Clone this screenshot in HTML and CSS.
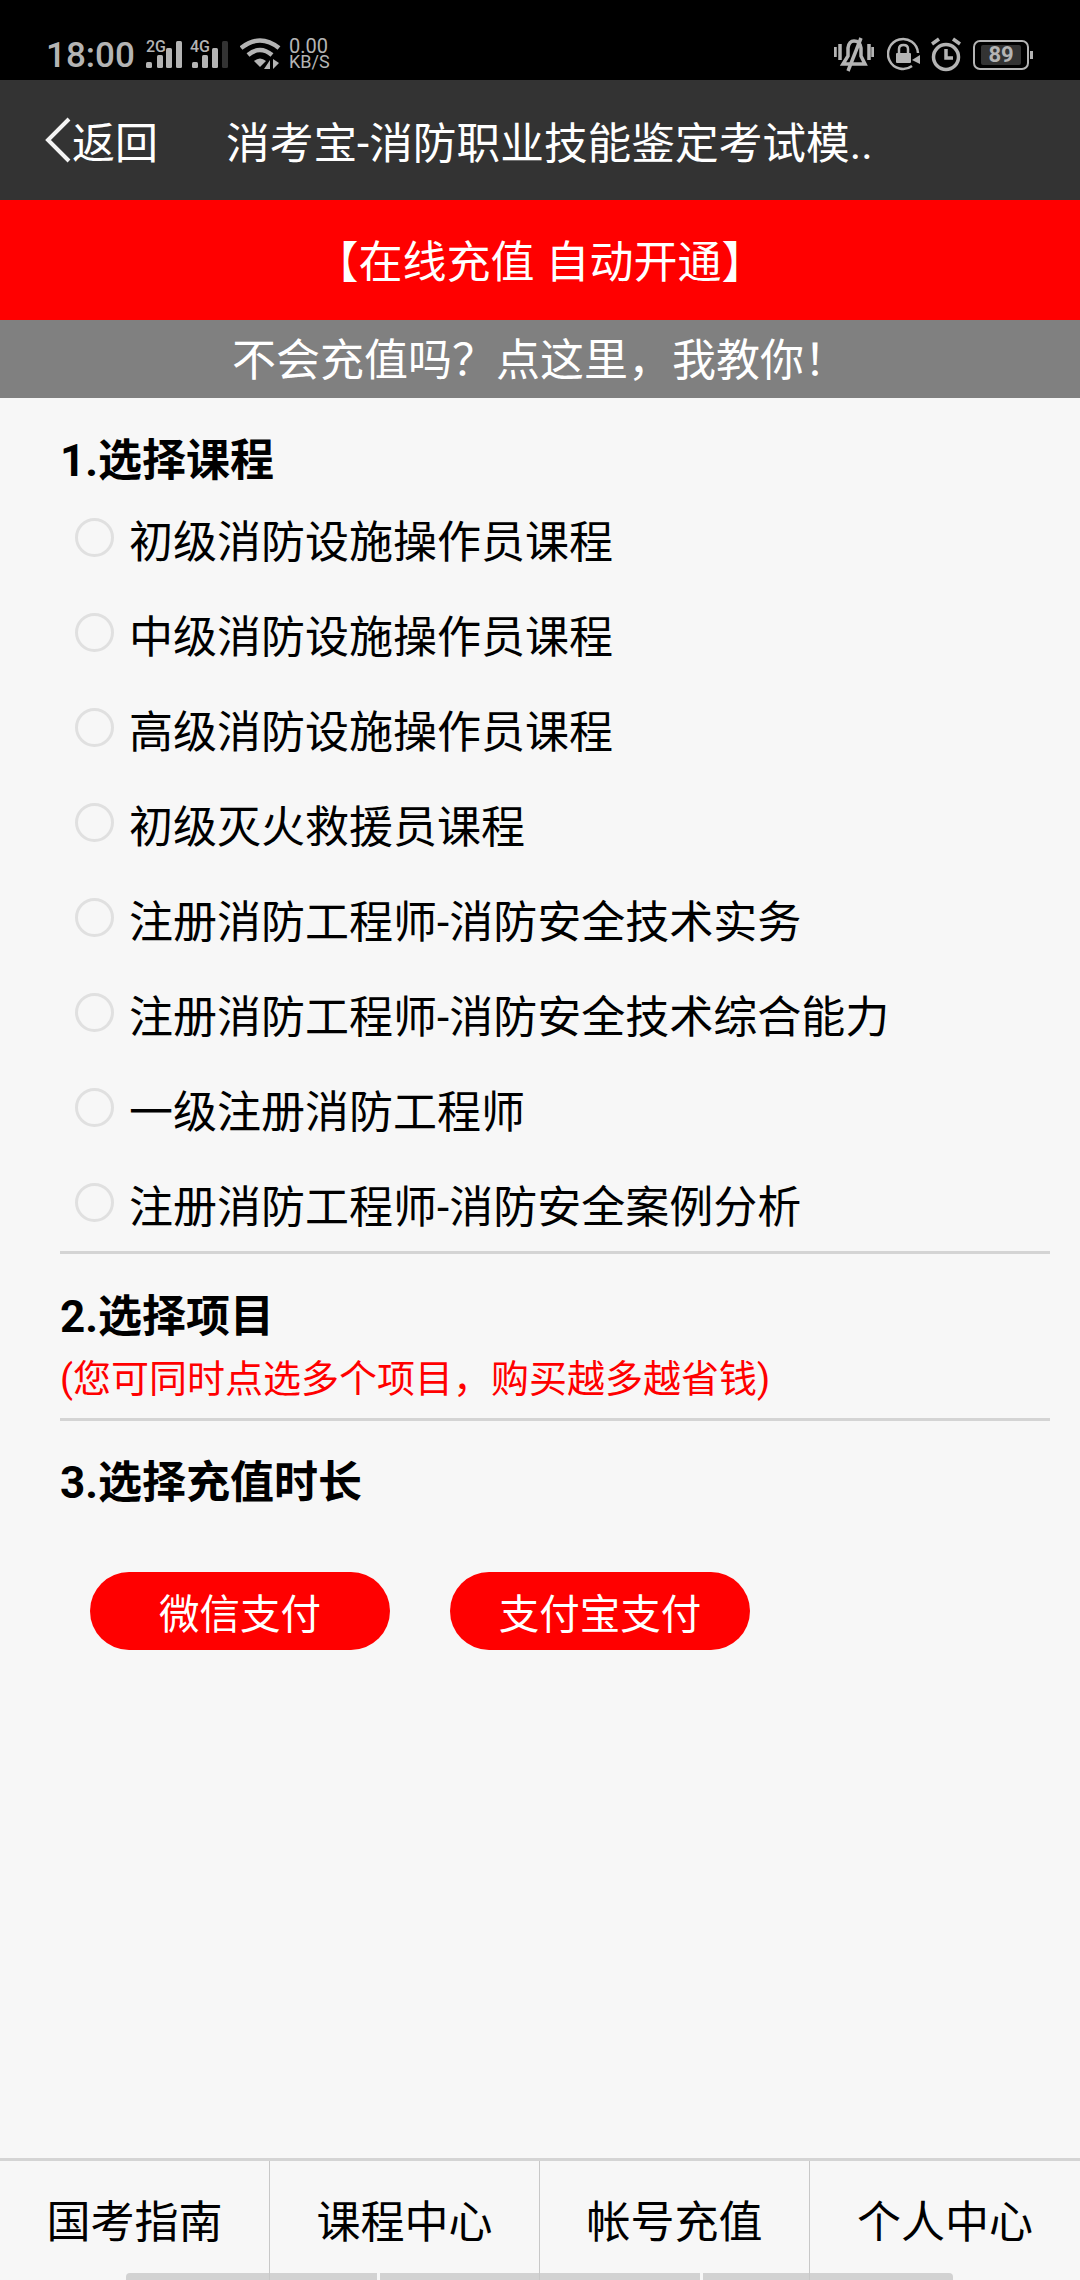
FILE: index.html
```html
<!DOCTYPE html>
<html lang="zh-CN">
<head>
    <meta charset="UTF-8">
    <meta name="viewport" content="width=device-width, initial-scale=1.0">
    <title>在线充值</title>
    <link rel="stylesheet" href="styles.css">
</head>
<body>
    <div class="status-bar">
        <span class="clock-text">18:00</span>
        <div class="signal">
            <span class="net-label">2G</span>
            <svg width="38" height="36" viewBox="0 0 38 36">
                <rect x="0" y="26" width="6" height="6" rx="1.5"/>
                <rect x="11" y="19" width="6" height="13" rx="1.5"/>
                <rect x="20" y="12" width="6" height="20" rx="1.5"/>
                <rect x="30" y="5" width="6" height="27" rx="1.5"/>
            </svg>
        </div>
        <div class="signal second">
            <span class="net-label">4G</span>
            <svg width="38" height="36" viewBox="0 0 38 36">
                <rect x="0" y="26" width="6" height="6" rx="1.5"/>
                <rect x="10" y="19" width="6" height="13" rx="1.5"/>
                <rect x="20" y="12" width="6" height="20" rx="1.5"/>
                <rect class="dim" x="30" y="5" width="6" height="27" rx="1.5"/>
            </svg>
        </div>
        <svg class="icon-wifi" width="44" height="36" viewBox="0 0 44 36">
            <path class="line" d="M1 12 Q20 -3 39 12"/>
            <path class="line" d="M8 19 Q20 9 32 19"/>
            <path d="M14 25 Q20 20 26 25 L20 31Z"/>
            <path d="M30 33 L30 24 L24 33Z M33 23 L33 33 L39 27Z"/>
        </svg>
        <div class="speed"><span>0.00</span><span class="speed-unit">KB/S</span></div>

        <div class="status-right">
            <svg class="icon-bell" width="40" height="36" viewBox="0 0 40 36">
                <path class="line thin" d="M1 11 V21 M6 8 V24 M35 8 V24 M39 11 V21"/>
                <path class="line thin" d="M9 28 H31 L27 20 V12 Q26 5 20 5 Q15 5 14 12 V20 Z"/>
                <path class="line thin" d="M27 2 L14 35"/>
            </svg>
            <svg class="icon-lock" width="34" height="36" viewBox="0 0 34 36">
                <path class="line ring" d="M25 30 A15 15 0 1 1 31 17"/>
                <path d="M25 24 L33 19 L33 28Z"/>
                <rect x="9" y="17" width="15" height="10" rx="1"/>
                <path class="line ring" d="M12 17 V13 Q12 9 16.500 9 Q21 9 21 13 V17"/>
            </svg>
            <svg class="icon-alarm" width="30" height="36" viewBox="0 0 30 36">
                <circle class="line thin" cx="15" cy="21" r="12.500"/>
                <path class="line thin" d="M15 13 V22 H22 M1 8 L8 3 M29 8 L22 3"/>
            </svg>
            <div class="battery"><span class="battery-level">89</span></div>
            <span class="battery-nub"></span>
        </div>
    </div>

    <header class="nav-bar">
        <a class="back" href="#">
            <svg width="28" height="46" viewBox="0 0 28 46"><path d="M25 2 L4 23 L25 44"/></svg>
            <span>返回</span>
        </a>
        <div class="nav-title">消考宝-消防职业技能鉴定考试模..</div>
    </header>

    <div class="banner">【在线充值 自动开通】</div>
    <div class="help-bar">不会充值吗&#xFF1F;点这里&#xFF0C;我教你&#xFF01;</div>

    <main class="content">
        <section class="step step-course">
            <h2>1.选择课程</h2>
            <ul class="course-list">
                <li><span class="radio"></span>初级消防设施操作员课程</li>
                <li><span class="radio"></span>中级消防设施操作员课程</li>
                <li><span class="radio"></span>高级消防设施操作员课程</li>
                <li><span class="radio"></span>初级灭火救援员课程</li>
                <li><span class="radio"></span>注册消防工程师-消防安全技术实务</li>
                <li><span class="radio"></span>注册消防工程师-消防安全技术综合能力</li>
                <li><span class="radio"></span>一级注册消防工程师</li>
                <li><span class="radio"></span>注册消防工程师-消防安全案例分析</li>
            </ul>
        </section>
        <section class="step step-project">
            <h2>2.选择项目</h2>
            <p class="hint">(您可同时点选多个项目&#xFF0C;购买越多越省钱)</p>
        </section>
        <section class="step-time">
            <h2>3.选择充值时长</h2>
        </section>
        <div class="pay-buttons">
            <button>微信支付</button>
            <button>支付宝支付</button>
        </div>
    </main>

    <footer class="tabs">
        <a href="#">国考指南</a>
        <a href="#">课程中心</a>
        <a href="#">帐号充值</a>
        <a href="#">个人中心</a>
    </footer>
    <div class="home-bar">
        <span class="seg-1"></span>
        <span class="seg-2"></span>
        <span class="seg-3"></span>
    </div>
</body>
</html>
```

FILE: styles.css
```css
* {
    box-sizing: border-box;
}
html, body {
    margin: 0;
    padding: 0;
}
body {
    position: relative;
    display: flex;
    flex-direction: column;
    width: 1080px;
    height: 2280px;
    overflow: hidden;
    background: #f7f7f7;
    color: #000;
    font-family: Roboto, "Noto Sans CJK SC", sans-serif;
}
a {
    color: inherit;
    text-decoration: none;
}

/* status bar */
.status-bar {
    display: flex;
    align-items: flex-start;
    flex: none;
    height: 80px;
    padding: 36px 0 0 46px;
    background: #000;
    color: #b4b4b4;
}
.status-bar svg {
    display: block;
    flex: none;
    fill: #b4b4b4;
}
.status-bar .line {
    fill: none;
    stroke: #b4b4b4;
    stroke-width: 4.5;
}
.status-bar .thin {
    stroke-width: 3.500;
}
.status-bar .ring {
    stroke-width: 2.500;
}
.status-bar .dim {
    fill: #333;
}
.clock-text {
    width: 100px;
    font-size: 35px;
    font-weight: 500;
    line-height: 40px;
    white-space: nowrap;
}
.signal {
    position: relative;
    flex: none;
    width: 38px;
    height: 36px;
}
.signal.second {
    margin-left: 8px;
}
.net-label {
    position: absolute;
    top: 3px;
    left: 0;
    font-size: 16px;
    font-weight: 500;
    line-height: 16px;
}
.signal.second .net-label {
    left: -2px;
}
.icon-wifi {
    margin-left: 10px;
}
.speed {
    display: flex;
    flex-direction: column;
    margin: 2px 0 0 5px;
    font-size: 20px;
    line-height: 16px;
}
.speed-unit {
    font-size: 18px;
}
.status-right {
    display: flex;
    align-items: flex-start;
    margin-left: auto;
    padding-right: 47px;
}
.icon-lock {
    margin-left: 13px;
}
.icon-alarm {
    margin-left: 10px;
}
.battery {
    width: 56px;
    height: 30px;
    margin: 4px 0 0 12px;
    padding: 3px 6px;
    border: 2px solid #b4b4b4;
    border-radius: 7px;
}
.battery-level {
    display: block;
    height: 20px;
    background: #333;
    border-radius: 2px;
    font-size: 22px;
    font-weight: 700;
    line-height: 20px;
    text-align: center;
}
.battery-nub {
    width: 3px;
    height: 8px;
    margin: 15px 0 0 1px;
    background: #b4b4b4;
}

/* nav */
.nav-bar {
    display: flex;
    align-items: center;
    flex: none;
    height: 120px;
    padding-left: 44px;
    background: #333;
    color: #fff;
}
.back {
    display: flex;
    align-items: center;
    width: 182px;
    font-size: 43px;
}
.back svg {
    display: block;
    fill: none;
    stroke: #f4f4f4;
    stroke-width: 4;
}
.nav-title {
    font-size: 43.700px;
}

.banner {
    flex: none;
    height: 120px;
    padding-top: 6px;
    background: #f00;
    color: #fff;
    font-size: 44px;
    line-height: 114px;
    text-align: center;
}
.help-bar {
    flex: none;
    height: 78px;
    padding-top: 5px;
    background: #808080;
    color: #fff;
    font-size: 44px;
    line-height: 73px;
    text-align: center;
}

/* form */
.content {
    flex: 1;
    padding: 0 30px 0 60px;
}
h2 {
    margin: 0;
    font-size: 44px;
    font-weight: 700;
    line-height: 60px;
}
.step {
    border-bottom: 3px solid #d4d4d4;
}
.step-course {
    padding-top: 33px;
    padding-bottom: 0;
}
.course-list {
    margin: 0;
    padding: 0;
    list-style: none;
}
.course-list li {
    display: flex;
    align-items: center;
    height: 95px;
    padding-left: 15px;
    font-size: 44px;
}
.radio {
    flex: none;
    width: 39px;
    height: 39px;
    margin: -3px 15px 0 0;
    border: 3px solid #e0e0e0;
    border-radius: 50%;
}
.step-project {
    padding-top: 33px;
    height: 167px;
}
.hint {
    margin: 0;
    padding-top: 3px;
    color: #f00;
    font-size: 38px;
    line-height: 58px;
}
.step-time {
    padding-top: 32px;
}
.pay-buttons {
    display: flex;
    gap: 60px;
    margin: 59px 0 0 30px;
}
.pay-buttons button {
    width: 300px;
    height: 78px;
    padding: 0;
    border: 0;
    border-radius: 39px;
    background: #f00;
    color: #fff;
    font-family: inherit;
    font-size: 40.500px;
}

/* tabs */
.tabs {
    display: grid;
    grid-template-columns: repeat(4, 1fr);
    flex: none;
    height: 122px;
    border-top: 3px solid #d4d4d4;
}
.tabs a {
    border-right: 1px solid #c8c8c8;
    padding-top: 4px;
    font-size: 44px;
    line-height: 116px;
    text-align: center;
}
.tabs a:last-child {
    border-right: 0;
}
.home-bar {
    position: absolute;
    left: 126px;
    bottom: 0;
    z-index: -1;
    display: flex;
    gap: 3px;
    height: 7px;
}
.home-bar span {
    background: #d2d2d2;
}
.seg-1 {
    width: 251px;
    border-radius: 4px 0 0 0;
}
.seg-2 {
    width: 320px;
}
.seg-3 {
    width: 250px;
    border-radius: 0 4px 0 0;
}
```
